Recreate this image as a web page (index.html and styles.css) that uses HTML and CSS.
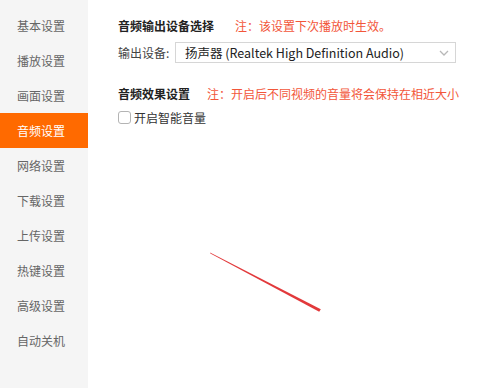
FILE: index.html
```html
<!DOCTYPE html>
<html lang="zh-CN">
<head>
<meta charset="utf-8">
<link rel="stylesheet" href="styles.css">
</head>
<body>
<div class="app">
  <nav class="sidebar">
    <div class="nav-item">基本设置</div>
    <div class="nav-item">播放设置</div>
    <div class="nav-item">画面设置</div>
    <div class="nav-item active">音频设置</div>
    <div class="nav-item">网络设置</div>
    <div class="nav-item">下载设置</div>
    <div class="nav-item">上传设置</div>
    <div class="nav-item">热键设置</div>
    <div class="nav-item">高级设置</div>
    <div class="nav-item">自动关机</div>
  </nav>
  <main class="content">
    <div class="section-head">
      <span class="section-title">音频输出设备选择</span>
      <span class="note note-1">注：该设置下次播放时生效。</span>
    </div>
    <div class="field-row">
      <span class="field-label">输出设备:</span>
      <div class="select">
        <span class="select-text">扬声器 (Realtek High Definition Audio)</span>
        <svg class="chevron" width="10" height="6" viewBox="0 0 10 6"><path d="M1 1 L5 5 L9 1" fill="none" stroke="#b8b8b8" stroke-width="1.3"/></svg>
      </div>
    </div>
    <div class="section-head section-2">
      <span class="section-title">音频效果设置</span>
      <span class="note note-2">注：开启后不同视频的音量将会保持在相近大小</span>
    </div>
    <label class="check-row">
      <span class="checkbox"></span>
      <span class="check-label">开启智能音量</span>
    </label>
  </main>
  <svg class="annotation" width="500" height="388" viewBox="0 0 500 388">
    <polygon points="210,252.6 210.4,253.4 319.2,311.8 320.8,309.2" fill="#e2393b"/>
  </svg>
</div>
</body>
</html>
```

FILE: styles.css
```css
html, body {
  margin: 0;
  padding: 0;
  background: #ffffff;
}
body {
  font-family: "Noto Sans CJK SC", "Noto Sans", sans-serif;
  font-size: 12px;
  color: #333;
}
.app {
  position: relative;
  display: flex;
  width: 500px;
  height: 388px;
  overflow: hidden;
}
.sidebar {
  width: 88px;
  flex: none;
  background: #f5f5f5;
  padding-top: 8px;
  box-sizing: border-box;
}
.nav-item {
  height: 35px;
  line-height: 35px;
  padding-left: 17px;
  color: #666;
  font-size: 12px;
}
.nav-item.active {
  background: #ff6a00;
  color: #fff;
}
.content {
  flex: 1;
  padding: 16px 0 0 30px;
}
.section-head {
  display: flex;
  align-items: center;
  height: 18px;
}
.section-title {
  font-weight: bold;
  color: #222;
}
.note {
  color: #f2563a;
}
.note-1 { margin-left: 21px; }
.note-2 { margin-left: 17px; }
.field-row {
  display: flex;
  align-items: center;
  margin-top: 8px;
  height: 21px;
}
.field-label {
  color: #444;
  width: 57px;
}
.select {
  width: 281px;
  height: 21px;
  box-sizing: border-box;
  border: 1px solid #d6d6d6;
  display: flex;
  align-items: center;
  justify-content: space-between;
  padding: 0 6px 0 9px;
}
.select-text {
  font-size: 12.5px;
  color: #222;
}
.section-2 {
  margin-top: 21px;
}
.check-row {
  display: flex;
  align-items: center;
  margin-top: 6px;
  height: 18px;
}
.checkbox {
  width: 11px;
  height: 11px;
  border: 1px solid #b4b4b4;
  border-radius: 3px;
  margin-right: 3px;
}
.check-label {
  color: #333;
}
.annotation {
  position: absolute;
  left: 0;
  top: 0;
  pointer-events: none;
}
```
